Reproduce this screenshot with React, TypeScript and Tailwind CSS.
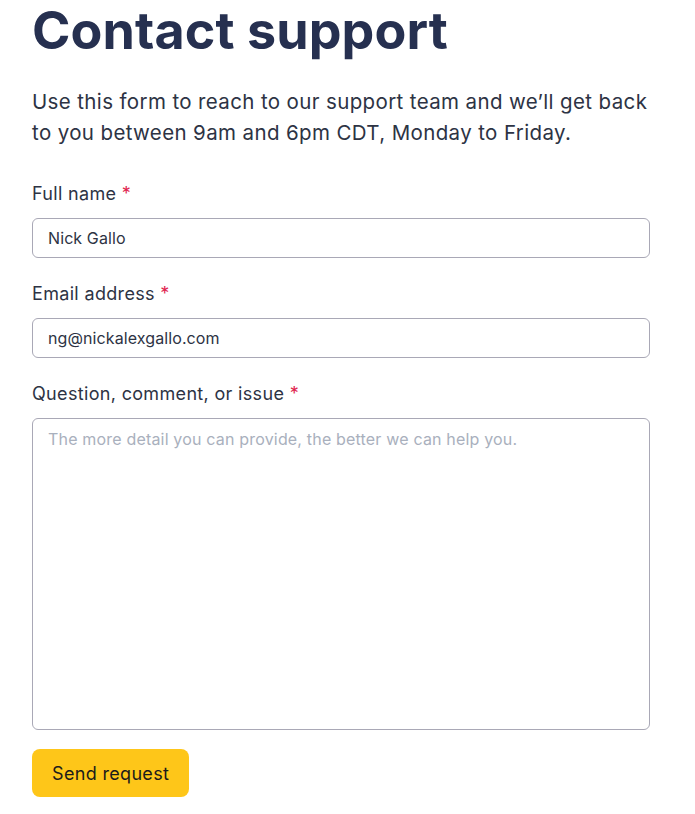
import { useState } from 'react';

// Contact support form
export default function App() {
  const [name, setName] = useState('Nick Gallo');
  const [email, setEmail] = useState('ng@nickalexgallo.com');
  const [message, setMessage] = useState('');

  return (
    <div className="min-h-screen bg-white font-['Inter',sans-serif]">
      <div className="pl-8 pr-[45px]">
        <h1 className="pt-[1px] text-[52px] leading-[60px] font-bold tracking-[0.1px] text-[#263050]">Contact support</h1>
        <p className="mt-[25px] text-[20.5px] leading-[31px] tracking-[0.37px] text-[#2d3344]">
          Use this form to reach to our support team and we’ll get back to you between 9am and 6pm CDT, Monday to
          Friday.
        </p>

        <form className="mt-[34px] flex flex-col" onSubmit={e => e.preventDefault()}>
          <Field label="Full name">
            <input
              value={name}
              onChange={e => setName(e.target.value)}
              className="h-[40px] w-full rounded-[6px] border border-[#a9a8b6] px-[15px] text-[16px] tracking-[0.1px] text-[#2d3344] outline-none"
            />
          </Field>
          <Field label="Email address">
            <input
              value={email}
              onChange={e => setEmail(e.target.value)}
              className="h-[40px] w-full rounded-[6px] border border-[#a9a8b6] px-[15px] text-[16px] tracking-[0.1px] text-[#2d3344] outline-none"
            />
          </Field>
          <Field label="Question, comment, or issue">
            <textarea
              value={message}
              onChange={e => setMessage(e.target.value)}
              placeholder="The more detail you can provide, the better we can help you."
              className="block h-[312px] w-full resize-none rounded-[6px] border border-[#a9a8b6] px-[15px] py-[9px] text-[16px] leading-[22px] tracking-[0.18px] text-[#2d3344] outline-none placeholder:text-[#a9b0bd]"
            />
          </Field>
          <div className="mt-[-5px]">
            <button
              type="submit"
              className="h-[48px] rounded-[8px] bg-[#fec619] px-[20px] text-[18px] tracking-[0.33px] text-[#1b1b1b]"
            >
              Send request
            </button>
          </div>
        </form>
      </div>
    </div>
  );
}

function Field({ label, children }: { label: string; children: React.ReactNode }) {
  return (
    <div className="mb-[24px] flex flex-col">
      <label className="mb-[12px] text-[18px] leading-[24px] tracking-[0.33px] text-[#2d3344]">
        {label} <span className="text-[#e0234e]">*</span>
      </label>
      {children}
    </div>
  );
}
